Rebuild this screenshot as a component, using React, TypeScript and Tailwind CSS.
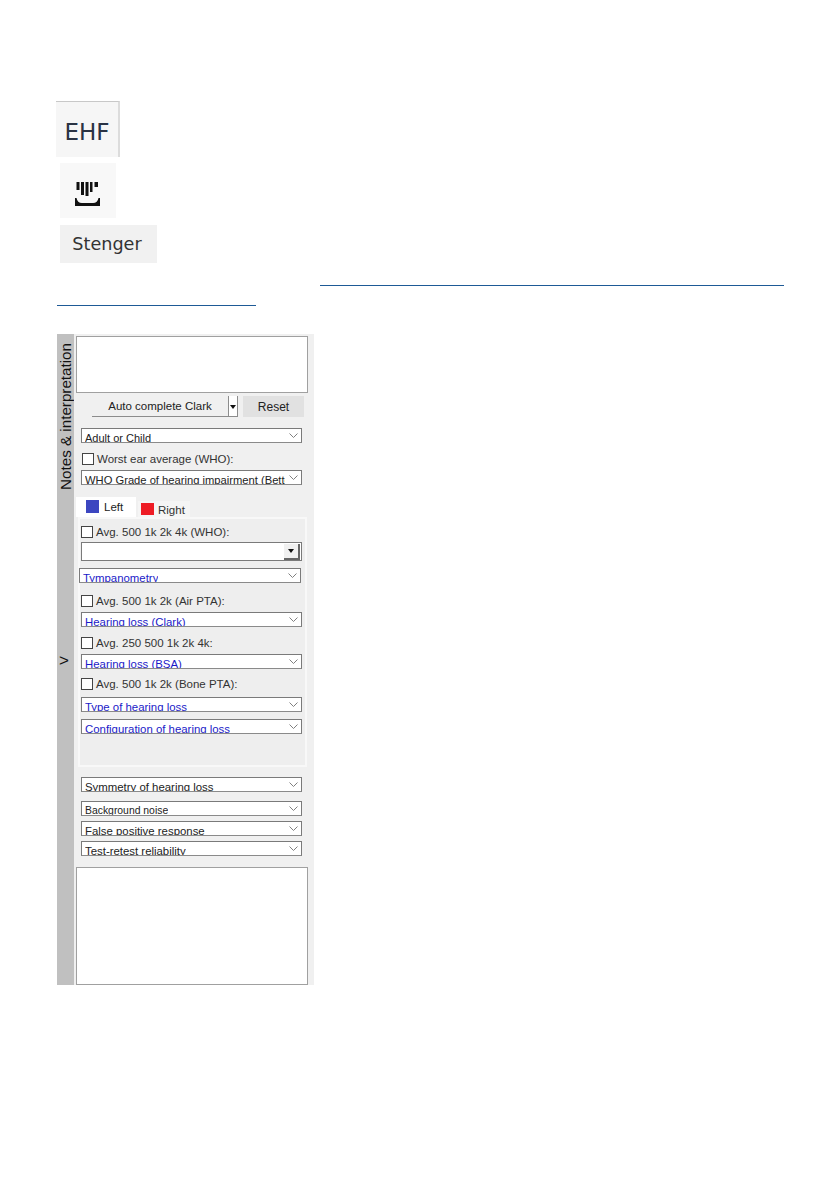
const UI_FONT = "font-['Liberation_Sans',Arial,sans-serif]";

const Chevron = () => (
  <svg width="9" height="5" viewBox="0 0 9 5" className="shrink-0" fill="none" stroke="#808080" strokeWidth="1">
    <path d="M.5.5l4 4 4-4" />
  </svg>
);

const ArrowDown = () => (
  <svg width="6" height="4" viewBox="0 0 6 4" fill="#111">
    <path d="M0 0h6L3 4z" />
  </svg>
);

const Select = ({
  label,
  blue,
  className = "",
  textClass = "text-[11.4px]",
}: {
  label: string;
  blue?: boolean;
  className?: string;
  textClass?: string;
}) => (
  <div
    className={`flex h-[15px] items-start justify-between overflow-hidden border border-[#7a7a7a] border-b-[#8a8a8a] bg-white pl-[3px] pr-[3px] leading-[14px] ${textClass} ${
      blue ? "text-[#1a1ac8]" : "text-[#222]"
    } ${className}`}
  >
    <span className="mt-[2px] overflow-hidden whitespace-nowrap">{label}</span>
    <span className="mt-[4px] ml-1 bg-white">
      <Chevron />
    </span>
  </div>
);

const Check = ({ label, className = "" }: { label: string; className?: string }) => (
  <div className={`flex h-[12px] items-center gap-[3px] text-[11.5px] leading-none text-[#333] ${className}`}>
    <span className="h-[12px] w-[12px] shrink-0 border border-[#444] bg-white" />
    <span className="mt-[1px] whitespace-nowrap">{label}</span>
  </div>
);

const LipIcon = () => (
  <svg width="26" height="26" viewBox="0 0 26 26" fill="#111" className="mt-[7px]">
    <rect x="1.500" y="1" width="3" height="8" />
    <rect x="6" y="1" width="3" height="13" />
    <rect x="10.500" y="1" width="3" height="14" />
    <rect x="15" y="1" width="2.500" height="10" />
    <rect x="19.500" y="1" width="3.500" height="5" />
    <path d="M0 17h1.500c.5 3 2.500 5 5.500 5h11c3 0 5-2 5.500-5H25v8H0z" />
  </svg>
);

export default function App() {
  return (
    <div className={`min-h-[1189px] bg-white pt-[101px] ${UI_FONT}`}>
      <div className="ml-[56px] flex h-[56px] w-[64px] items-center justify-center border-t border-r-2 border-[#c8c8c8] border-r-[#dcdcdc] bg-[#f6f6f6] pt-[6px] font-['DejaVu_Sans',sans-serif] text-[23px] text-[#2a3344]">
        EHF
      </div>
      <div className="ml-[60px] mt-[6px] flex h-[55px] w-[56px] items-center justify-center bg-[#f8f8f8]">
        <LipIcon />
      </div>
      <div className="ml-[60px] mt-[7px] flex h-[38px] w-[97px] items-center justify-center bg-[#f1f1f1] pr-[3px] font-['DejaVu_Sans',sans-serif] text-[17.6px] text-[#333]">
        Stenger
      </div>

      <div className="ml-[320px] mt-[22px] h-px w-[464px] bg-[#1e5a96]" />
      <div className="ml-[57px] mt-[19px] h-px w-[199px] bg-[#1e5a96]" />

      <div className="ml-[57px] mt-[28px] flex h-[651px] w-[257px] bg-[#f0f0f0] text-black">
        <div className="relative flex w-[17px] shrink-0 flex-col items-center bg-[#c0c0c0]">
          <span className="mt-[9px] rotate-180 whitespace-nowrap text-[15.2px] leading-[17px] text-[#111] [writing-mode:vertical-rl]">
            Notes &amp; interpretation
          </span>
          <span className="absolute left-[2px] top-[318px] text-[17px] leading-[18px] text-[#111]">&gt;</span>
        </div>

        <div className="ml-[2px] flex w-[232px] flex-col pt-[2px]">
          <div className="h-[57px] border border-[#a0a0a0] bg-white" />

          <div className="mt-[3px] flex h-[21px] items-stretch pl-[16px] text-[11.5px] text-[#222]">
            <div className="flex w-[136px] items-center justify-center border-b border-[#8c8c8c] pt-[2px]">
              Auto complete Clark
            </div>
            <div className="flex w-[10px] items-center justify-center border-x border-b border-[#8c8c8c] bg-white pt-[1px]">
              <ArrowDown />
            </div>
            <div className="ml-[5px] flex w-[61px] items-center justify-center bg-[#e1e1e1] text-[12px]">Reset</div>
          </div>

          <div className="pl-[5px] pr-[6px]">
            <Select label="Adult or Child" className="mt-[11px]" textClass="text-[11px]" />
            <Check label="Worst ear average (WHO):" className="ml-[1px] mt-[10px]" />
            <Select label="WHO Grade of hearing impairment (Better ear)" className="mt-[5px]" textClass="text-[11.2px]" />
          </div>

          <div className="mt-[12px] flex h-[20px] items-end">
            <div className="flex h-[20px] w-[60px] items-start bg-white pl-[10px] pt-[3px] text-[11.5px] leading-[14px] text-[#222]">
              <span className="mr-[5px] h-[13px] w-[13px] bg-[#3c46c0]" />
              Left
            </div>
            <div className="ml-[2px] flex h-[16px] w-[52px] items-start bg-[#f5f5f5] pl-[3px] pt-[2px] text-[11.5px] leading-[14px] text-[#333]">
              <span className="mr-[4px] h-[12px] w-[13px] bg-[#ee1c25]" />
              Right
            </div>
          </div>

          <div className="ml-[2px] h-[250px] w-[229px] border-2 border-[#f8f8f8] bg-[#eeeeee] px-[1px] pt-[7px]">
            <Check label="Avg. 500 1k 2k 4k (WHO):" />
            <div className="mt-[4px] flex h-[19px] w-[221px] items-center justify-end border border-[#7a7a7a] bg-white pr-[1px]">
              <span className="flex h-[16px] w-[16px] items-center justify-center border-b-2 border-r-2 border-[#666] bg-[#f0f0f0]">
                <ArrowDown />
              </span>
            </div>
            <Select label="Tympanometry" blue className="-ml-[2px] mt-[7px] w-[222px]" />
            <Check label="Avg. 500 1k 2k (Air PTA):" className="mt-[12px]" />
            <Select label="Hearing loss (Clark)" blue className="mt-[5px] w-[221px]" />
            <Check label="Avg. 250 500 1k 2k 4k:" className="mt-[10px]" />
            <Select label="Hearing loss (BSA)" blue className="mt-[5px] w-[221px]" />
            <Check label="Avg. 500 1k 2k (Bone PTA):" className="mt-[9px]" />
            <Select label="Type of hearing loss" blue className="mt-[7px] w-[221px]" />
            <Select label="Configuration of hearing loss" blue className="mt-[7px] w-[221px]" />
          </div>

          <div className="pl-[5px] pr-[6px]">
            <Select label="Symmetry of hearing loss" className="mt-[10px]" />
            <Select label="Background noise" className="mt-[9px]" textClass="text-[10.4px]" />
            <Select label="False positive response" className="mt-[5px]" />
            <Select label="Test-retest reliability" className="mt-[5px]" />
          </div>

          <div className="mt-[11px] flex-1 border border-[#a0a0a0] bg-white" />
        </div>
      </div>
    </div>
  );
}
